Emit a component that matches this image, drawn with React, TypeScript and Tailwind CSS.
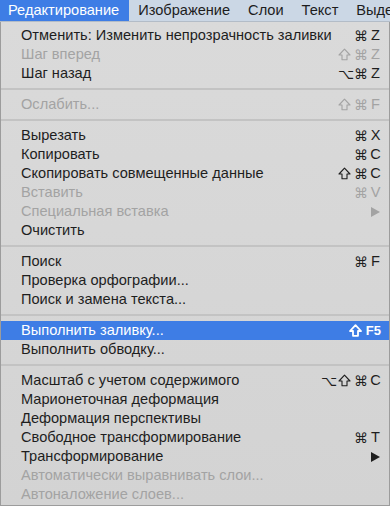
import type { ReactNode } from 'react'

type Item =
  | { kind: 'sep' }
  | {
      kind: 'item'
      label: string
      keys?: string
      disabled?: boolean
      submenu?: boolean
      active?: boolean
    }

const items: Item[] = [
  { kind: 'item', label: 'Отменить: Изменить непрозрачность заливки', keys: '⌘Z' },
  { kind: 'item', label: 'Шаг вперед', keys: '⇧⌘Z', disabled: true },
  { kind: 'item', label: 'Шаг назад', keys: '⌥⌘Z' },
  { kind: 'sep' },
  { kind: 'item', label: 'Ослабить...', keys: '⇧⌘F', disabled: true },
  { kind: 'sep' },
  { kind: 'item', label: 'Вырезать', keys: '⌘X' },
  { kind: 'item', label: 'Копировать', keys: '⌘C' },
  { kind: 'item', label: 'Скопировать совмещенные данные', keys: '⇧⌘C' },
  { kind: 'item', label: 'Вставить', keys: '⌘V', disabled: true },
  { kind: 'item', label: 'Специальная вставка', submenu: true, disabled: true },
  { kind: 'item', label: 'Очистить' },
  { kind: 'sep' },
  { kind: 'item', label: 'Поиск', keys: '⌘F' },
  { kind: 'item', label: 'Проверка орфографии...' },
  { kind: 'item', label: 'Поиск и замена текста...' },
  { kind: 'sep' },
  { kind: 'item', label: 'Выполнить заливку...', keys: '⇧F5', active: true },
  { kind: 'item', label: 'Выполнить обводку...' },
  { kind: 'sep' },
  { kind: 'item', label: 'Масштаб с учетом содержимого', keys: '⌥⇧⌘C' },
  { kind: 'item', label: 'Марионеточная деформация' },
  { kind: 'item', label: 'Деформация перспективы' },
  { kind: 'item', label: 'Свободное трансформирование', keys: '⌘T' },
  { kind: 'item', label: 'Трансформирование', submenu: true },
  { kind: 'item', label: 'Автоматически выравнивать слои...', disabled: true },
  { kind: 'item', label: 'Автоналожение слоев...', disabled: true },
]

const menus = ['Редактирование', 'Изображение', 'Слои', 'Текст', 'Выделение']

const MODS = '⌘⇧⌥'

export default function App() {
  return (
    <div
      className="w-[390px] h-[508px] overflow-hidden bg-white text-[14.6px] leading-none"
      style={{ fontFamily: '"Liberation Sans", Arial, sans-serif' }}
    >
      <MenuBar />
      <div className="w-[390px] border-x border-b border-[#9c9c9c] bg-gradient-to-b from-[#dadada] to-[#d3d3d3] pt-[4px] pb-[1px]">
        {items.map((it, i) =>
          it.kind === 'sep' ? <Separator key={i} /> : <Row key={i} item={it} />,
        )}
      </div>
    </div>
  )
}

function MenuBar() {
  return (
    <div className="flex h-[22px] items-stretch overflow-hidden bg-[#cbd7e5] border-b border-[#b3bcc7] whitespace-nowrap">
      {menus.map((m, i) => (
        <div
          key={m}
          className={
            i === 0
              ? 'flex shrink-0 items-center pl-[8px] pr-[10px] bg-[#3e7de5] text-white'
              : 'flex shrink-0 items-center px-[9px] text-[#1d1d1d]'
          }
        >
          {m}
        </div>
      ))}
    </div>
  )
}

function Separator() {
  return (
    <div className="h-[12px] flex flex-col justify-center">
      <div className="h-[2px] bg-[#c3c3c3]" />
    </div>
  )
}

function Row({ item }: { item: Extract<Item, { kind: 'item' }> }) {
  const color = item.active
    ? 'text-white'
    : item.disabled
      ? 'text-[#a3a3a3]'
      : 'text-[#1e1e1e]'

  let right: ReactNode = null
  if (item.submenu) {
    right = (
      <svg width="9" height="10" viewBox="0 0 9 10" className="mr-[1px]">
        <path d="M0 0 L9 5 L0 10 Z" fill="currentColor" />
      </svg>
    )
  } else if (item.keys) {
    right = <Keys keys={item.keys} active={item.active} />
  }

  return (
    <div
      className={`flex h-[19px] items-center justify-between pl-[20px] pr-[8px] ${color} ${
        item.active ? 'bg-[#3e7de5]' : ''
      }`}
    >
      <span className="whitespace-nowrap">{item.label}</span>
      {right}
    </div>
  )
}

// outlined shift arrow, DejaVu's glyph is too small next to the others
function ShiftIcon({ bold }: { bold?: boolean }) {
  return (
    <svg width="13" height="13" viewBox="0 0 13 13" className="mx-[1px]">
      <path
        d="M6.5 1.2 L12 7 H9 V11.8 H4 V7 H1 Z"
        fill="none"
        stroke="currentColor"
        strokeWidth={bold ? 1.8 : 1.1}
        strokeLinejoin="round"
      />
    </svg>
  )
}

function Keys({ keys, active }: { keys: string; active?: boolean }) {
  const chars = keys.split('')
  const mods = chars.filter((c) => MODS.includes(c))
  const rest = chars.filter((c) => !MODS.includes(c)).join('')
  return (
    <span className="flex items-center gap-[2px] whitespace-nowrap">
      {mods.map((k, i) =>
        k === '⇧' ? (
          <ShiftIcon key={i} bold={active} />
        ) : (
          <span
            key={i}
            className="w-[14px] text-center text-[14px]"
            style={{ fontFamily: '"DejaVu Sans", sans-serif' }}
          >
            {k}
          </span>
        ),
      )}
      <span
        className={
          active
            ? 'min-w-[11px] ml-[1px] text-center text-[13px] font-bold'
            : 'min-w-[11px] text-center'
        }
      >
        {rest}
      </span>
    </span>
  )
}
